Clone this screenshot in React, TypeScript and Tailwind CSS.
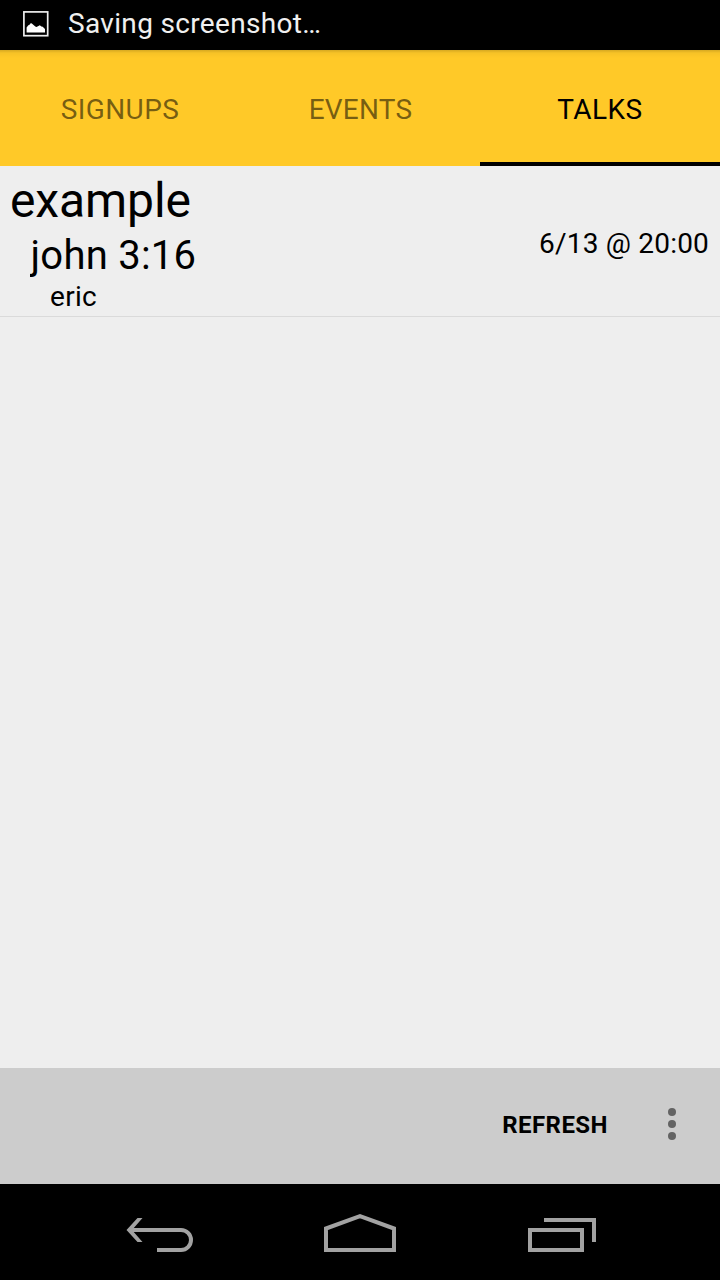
export default function App() {
  return (
    <div className="flex h-[1280px] w-[720px] flex-col overflow-hidden bg-[#eeeeee] font-['Roboto',sans-serif] text-black">
      <header className="flex h-[50px] shrink-0 items-center bg-black pl-[23px]">
        <svg className="-mt-[2px] h-[26px] w-[26px]" viewBox="0 0 26 26">
          <rect x=".9" y=".9" width="23.8" height="23.8" fill="none" stroke="#eee" strokeWidth="1.7" />
          <path d="M3.6 21.5v-5l1.7-2.2 1-.2 1-1.5 1.2-.4 3.8 3.4 1.2.4 3.3-1.8 1.6 1.2 1.3.3 2.3 2.3v3.5z" fill="#fff" />
        </svg>
        <span className="-mt-[3px] ml-[19px] text-[28px] leading-[34px] tracking-[0.33px] text-[#f0f0f0]">Saving screenshot…</span>
      </header>
      <nav className="grid h-[116px] shrink-0 grid-cols-3 bg-[#ffc928] bg-[linear-gradient(to_bottom,rgba(0,0,0,0.16),rgba(0,0,0,0.035)_3px,transparent_8px)] text-[28px] text-black/55">
        <div className="flex items-center justify-center pt-[3px] tracking-[0.4px]">SIGNUPS</div>
        <div className="flex items-center justify-center pt-[3px] pl-px tracking-[0.2px]">EVENTS</div>
        <div className="flex items-center justify-center border-b-4 border-black pt-[7px] tracking-[0.45px] text-black">TALKS</div>
      </nav>
      <main className="min-h-0 flex-1">
        <div className="flex h-[151px] items-center justify-between border-b border-[#dadada] pt-[6px] pr-[11px] pl-[10px]">
          <div>
            <div className="-mt-[3px] pb-[2px] text-[48px] leading-[56px] tracking-[-0.1px]">example</div>
            <div className="ml-5 h-[49px]">
              <div className="h-[47px] overflow-hidden pl-[0.5px] text-[40px] leading-[49px] tracking-[0.25px]">john 3:16</div>
            </div>
            <div className="ml-10 text-[28px] leading-[33px] tracking-[0.3px]">eric</div>
          </div>
          <div className="text-[28px] tracking-[0.2px]">6/13 @ 20:00</div>
        </div>
      </main>
      <div className="flex h-[116px] shrink-0 items-center justify-end bg-[#cccccc] pr-[43px]">
        <span className="-mt-[2px] text-[24px] font-bold tracking-[0.45px]">REFRESH</span>
        <svg className="mt-[-4px] ml-[59px] h-9 w-[10px]" viewBox="0 0 10 36" fill="#636363">
          <circle cx="5" cy="6" r="4" /><circle cx="5" cy="18" r="4" /><circle cx="5" cy="30" r="4" />
        </svg>
      </div>
      <footer className="flex h-24 shrink-0 items-center bg-black">
        <svg className="h-24 w-[720px]" viewBox="0 1184 720 96" fill="none" stroke="#a2a2a2" strokeWidth="4">
          <path d="M129 1230h52a10 10 0 0 1 0 20h-24" />
          <path d="M137.5 1218h5l-10.5 12 10.5 12h-5l-11-12z" fill="#a2a2a2" stroke="none" />
          <path d="M326 1250v-21.5l34-12.4 34 12.4v21.5z" />
          <path d="M530 1230h52v20h-52zM544 1220h50v22" />
        </svg>
      </footer>
    </div>
  );
}
